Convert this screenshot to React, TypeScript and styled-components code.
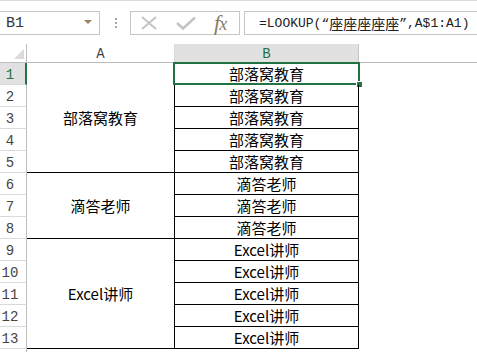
import React from "react";
import styled, { createGlobalStyle } from "styled-components";

const Green = "#217346";
const HeaderLine = "#bdbdbd";
const RowLine = "#dadada";
const Selected = "#e1e1e1";

const GlobalStyle = createGlobalStyle`
  html, body {
    margin: 0;
    padding: 0;
    background: #ffffff;
    overflow: hidden;
  }
  body {
    font-family: "Noto Sans CJK SC", "Noto Sans", sans-serif;
  }
`;

const Page = styled.div`
  width: 477px;
  height: 352px;
  overflow: hidden;
  border-top: 1px solid #dcdcdc;
  box-sizing: border-box;
`;

const FormulaBar = styled.div`
  display: flex;
  align-items: center;
  height: 24px;
  margin-top: 10px;
`;

const NameBox = styled.div`
  position: relative;
  box-sizing: border-box;
  width: 101px;
  height: 24px;
  margin-left: -1px;
  border: 1px solid #c6c6c6;
  display: flex;
  align-items: center;
  padding-left: 6px;
  font-family: "Liberation Mono", monospace;
  font-size: 15px;
  color: #333;
`;

const DropArrow = styled.span`
  position: absolute;
  right: 7px;
  top: 8px;
  width: 0;
  height: 0;
  border-left: 4px solid transparent;
  border-right: 4px solid transparent;
  border-top: 4px solid #9b7f5f;
`;

const Grip = styled.div`
  display: flex;
  flex-direction: column;
  gap: 2px;
  margin: 0 13px 0 15px;
`;

const GripDot = styled.span`
  width: 2px;
  height: 2px;
  background: #a6a6a6;
`;

const ButtonBox = styled.div`
  box-sizing: border-box;
  width: 110px;
  height: 24px;
  border: 1px solid #c6c6c6;
  display: flex;
  align-items: center;
  padding-left: 9px;
  gap: 18px;
`;

const Fx = styled.span`
  font-family: "Liberation Serif", serif;
  font-style: italic;
  color: #8c7a5f;
  font-size: 22px;
  line-height: 1;
  letter-spacing: -1px;

  & small {
    font-size: 18px;
  }
`;

const FormulaBox = styled.div`
  box-sizing: border-box;
  flex: 1;
  height: 24px;
  margin-left: 4px;
  margin-right: -20px;
  border: 1px solid #c6c6c6;
  display: flex;
  align-items: center;
  padding-left: 14px;
  white-space: nowrap;
  overflow: hidden;
  font-family: "Liberation Mono", "Noto Sans CJK SC", monospace;
  font-size: 13px;
  color: #222;
`;

const Cjk = styled.span`
  font-family: "Noto Sans CJK SC", sans-serif;
  font-size: 14px;
`;

const Sheet = styled.div`
  display: grid;
  grid-template-columns: 27px 148px 184px 1fr;
  grid-template-rows: 19px repeat(14, 22px);
  margin-top: 9px;
`;

const Corner = styled.div`
  box-sizing: border-box;
  border-right: 1px solid ${HeaderLine};
  border-bottom: 1px solid ${HeaderLine};
  display: flex;
  align-items: flex-end;
  justify-content: flex-end;
  padding: 0 2px 3px 0;
`;

const ColHeader = styled.div<{ $active?: boolean }>`
  box-sizing: border-box;
  background: ${(p) => (p.$active ? Selected : "#ffffff")};
  border-right: 1px solid ${(p) => (p.$active ? "#c6c6c6" : RowLine)};
  border-bottom: 1px solid ${HeaderLine};
  display: flex;
  align-items: center;
  justify-content: center;
  padding-top: 2px;
  font-family: "Liberation Mono", monospace;
  font-size: 14px;
  color: ${(p) => (p.$active ? Green : "#444")};
`;

const HeaderRest = styled.div`
  box-sizing: border-box;
  border-bottom: 1px solid ${HeaderLine};
`;

const RowHeader = styled.div<{ $active?: boolean }>`
  box-sizing: border-box;
  background: ${(p) => (p.$active ? Selected : "#ffffff")};
  border-right: ${(p) => (p.$active ? `2px solid ${Green}` : `1px solid ${HeaderLine}`)};
  border-bottom: 1px solid ${RowLine};
  display: flex;
  align-items: center;
  justify-content: center;
  padding: 2px ${(p) => (p.$active ? 5 : 6)}px 0 0;
  font-family: "Liberation Mono", monospace;
  font-size: 14px;
  color: ${(p) => (p.$active ? Green : "#444")};
`;

const MergedCell = styled.div<{ $start: number; $span: number }>`
  box-sizing: border-box;
  grid-column: 2;
  grid-row: ${(p) => p.$start} / span ${(p) => p.$span};
  border-right: 1px solid #000;
  border-bottom: 1px solid #000;
  display: flex;
  align-items: center;
  justify-content: center;
  font-size: 15px;
  color: #000;
`;

const Cell = styled.div`
  position: relative;
  box-sizing: border-box;
  grid-column: 3;
  border-right: 1px solid #000;
  border-bottom: 1px solid #000;
  display: flex;
  align-items: center;
  justify-content: center;
  font-size: 15px;
  color: #000;
`;

const Selection = styled.div`
  position: absolute;
  left: -2px;
  top: -1px;
  right: -2px;
  bottom: -1px;
  border: 2px solid ${Green};
  pointer-events: none;
`;

const FillHandle = styled.span`
  position: absolute;
  right: -5px;
  bottom: -5px;
  width: 5px;
  height: 5px;
  background: ${Green};
  border: 1px solid #ffffff;
`;

const groups = [
  { label: "部落窝教育", start: 1, count: 5 },
  { label: "滴答老师", start: 6, count: 3 },
  { label: "Excel讲师", start: 9, count: 5 },
];

const CornerMark = () => (
  <svg width="10" height="10" viewBox="0 0 10 10">
    <polygon points="10,0 10,10 0,10" fill="#dadada" />
  </svg>
);

const CancelIcon = () => (
  <svg width="18" height="14" viewBox="0 0 18 14">
    <path d="M2 1 L16 13 M16 1 L2 13" stroke="#c4c4c4" strokeWidth="2" fill="none" />
  </svg>
);

const EnterIcon = () => (
  <svg width="20" height="14" viewBox="0 0 20 14">
    <path d="M1 7 L7 12.5 L19 1.5" stroke="#c4c4c4" strokeWidth="2.6" fill="none" />
  </svg>
);

export default function App() {
  const rows = Array.from({ length: 14 }, (_, i) => i + 1);

  return (
    <Page>
      <GlobalStyle />
      <FormulaBar>
        <NameBox>
          B1
          <DropArrow />
        </NameBox>
        <Grip>
          <GripDot />
          <GripDot />
          <GripDot />
        </Grip>
        <ButtonBox>
          <CancelIcon />
          <EnterIcon />
          <Fx>
            f<small>x</small>
          </Fx>
        </ButtonBox>
        <FormulaBox>
          =LOOKUP(“<Cjk>座座座座座</Cjk>”,A$1:A1)
        </FormulaBox>
      </FormulaBar>

      <Sheet>
        <Corner>
          <CornerMark />
        </Corner>
        <ColHeader>A</ColHeader>
        <ColHeader $active>B</ColHeader>
        <HeaderRest />

        {rows.map((r) => (
          <RowHeader key={`h${r}`} $active={r === 1} style={{ gridRow: r + 1 }}>
            {r <= 13 ? r : null}
          </RowHeader>
        ))}

        {groups.map((g) => (
          <MergedCell key={g.label} $start={g.start + 1} $span={g.count}>
            {g.label}
          </MergedCell>
        ))}

        {groups.flatMap((g) =>
          Array.from({ length: g.count }, (_, i) => {
            const r = g.start + i;
            return (
              <Cell key={`b${r}`} style={{ gridRow: r + 1 }}>
                {g.label}
                {r === 1 && (
                  <Selection>
                    <FillHandle />
                  </Selection>
                )}
              </Cell>
            );
          })
        )}
      </Sheet>
    </Page>
  );
}
